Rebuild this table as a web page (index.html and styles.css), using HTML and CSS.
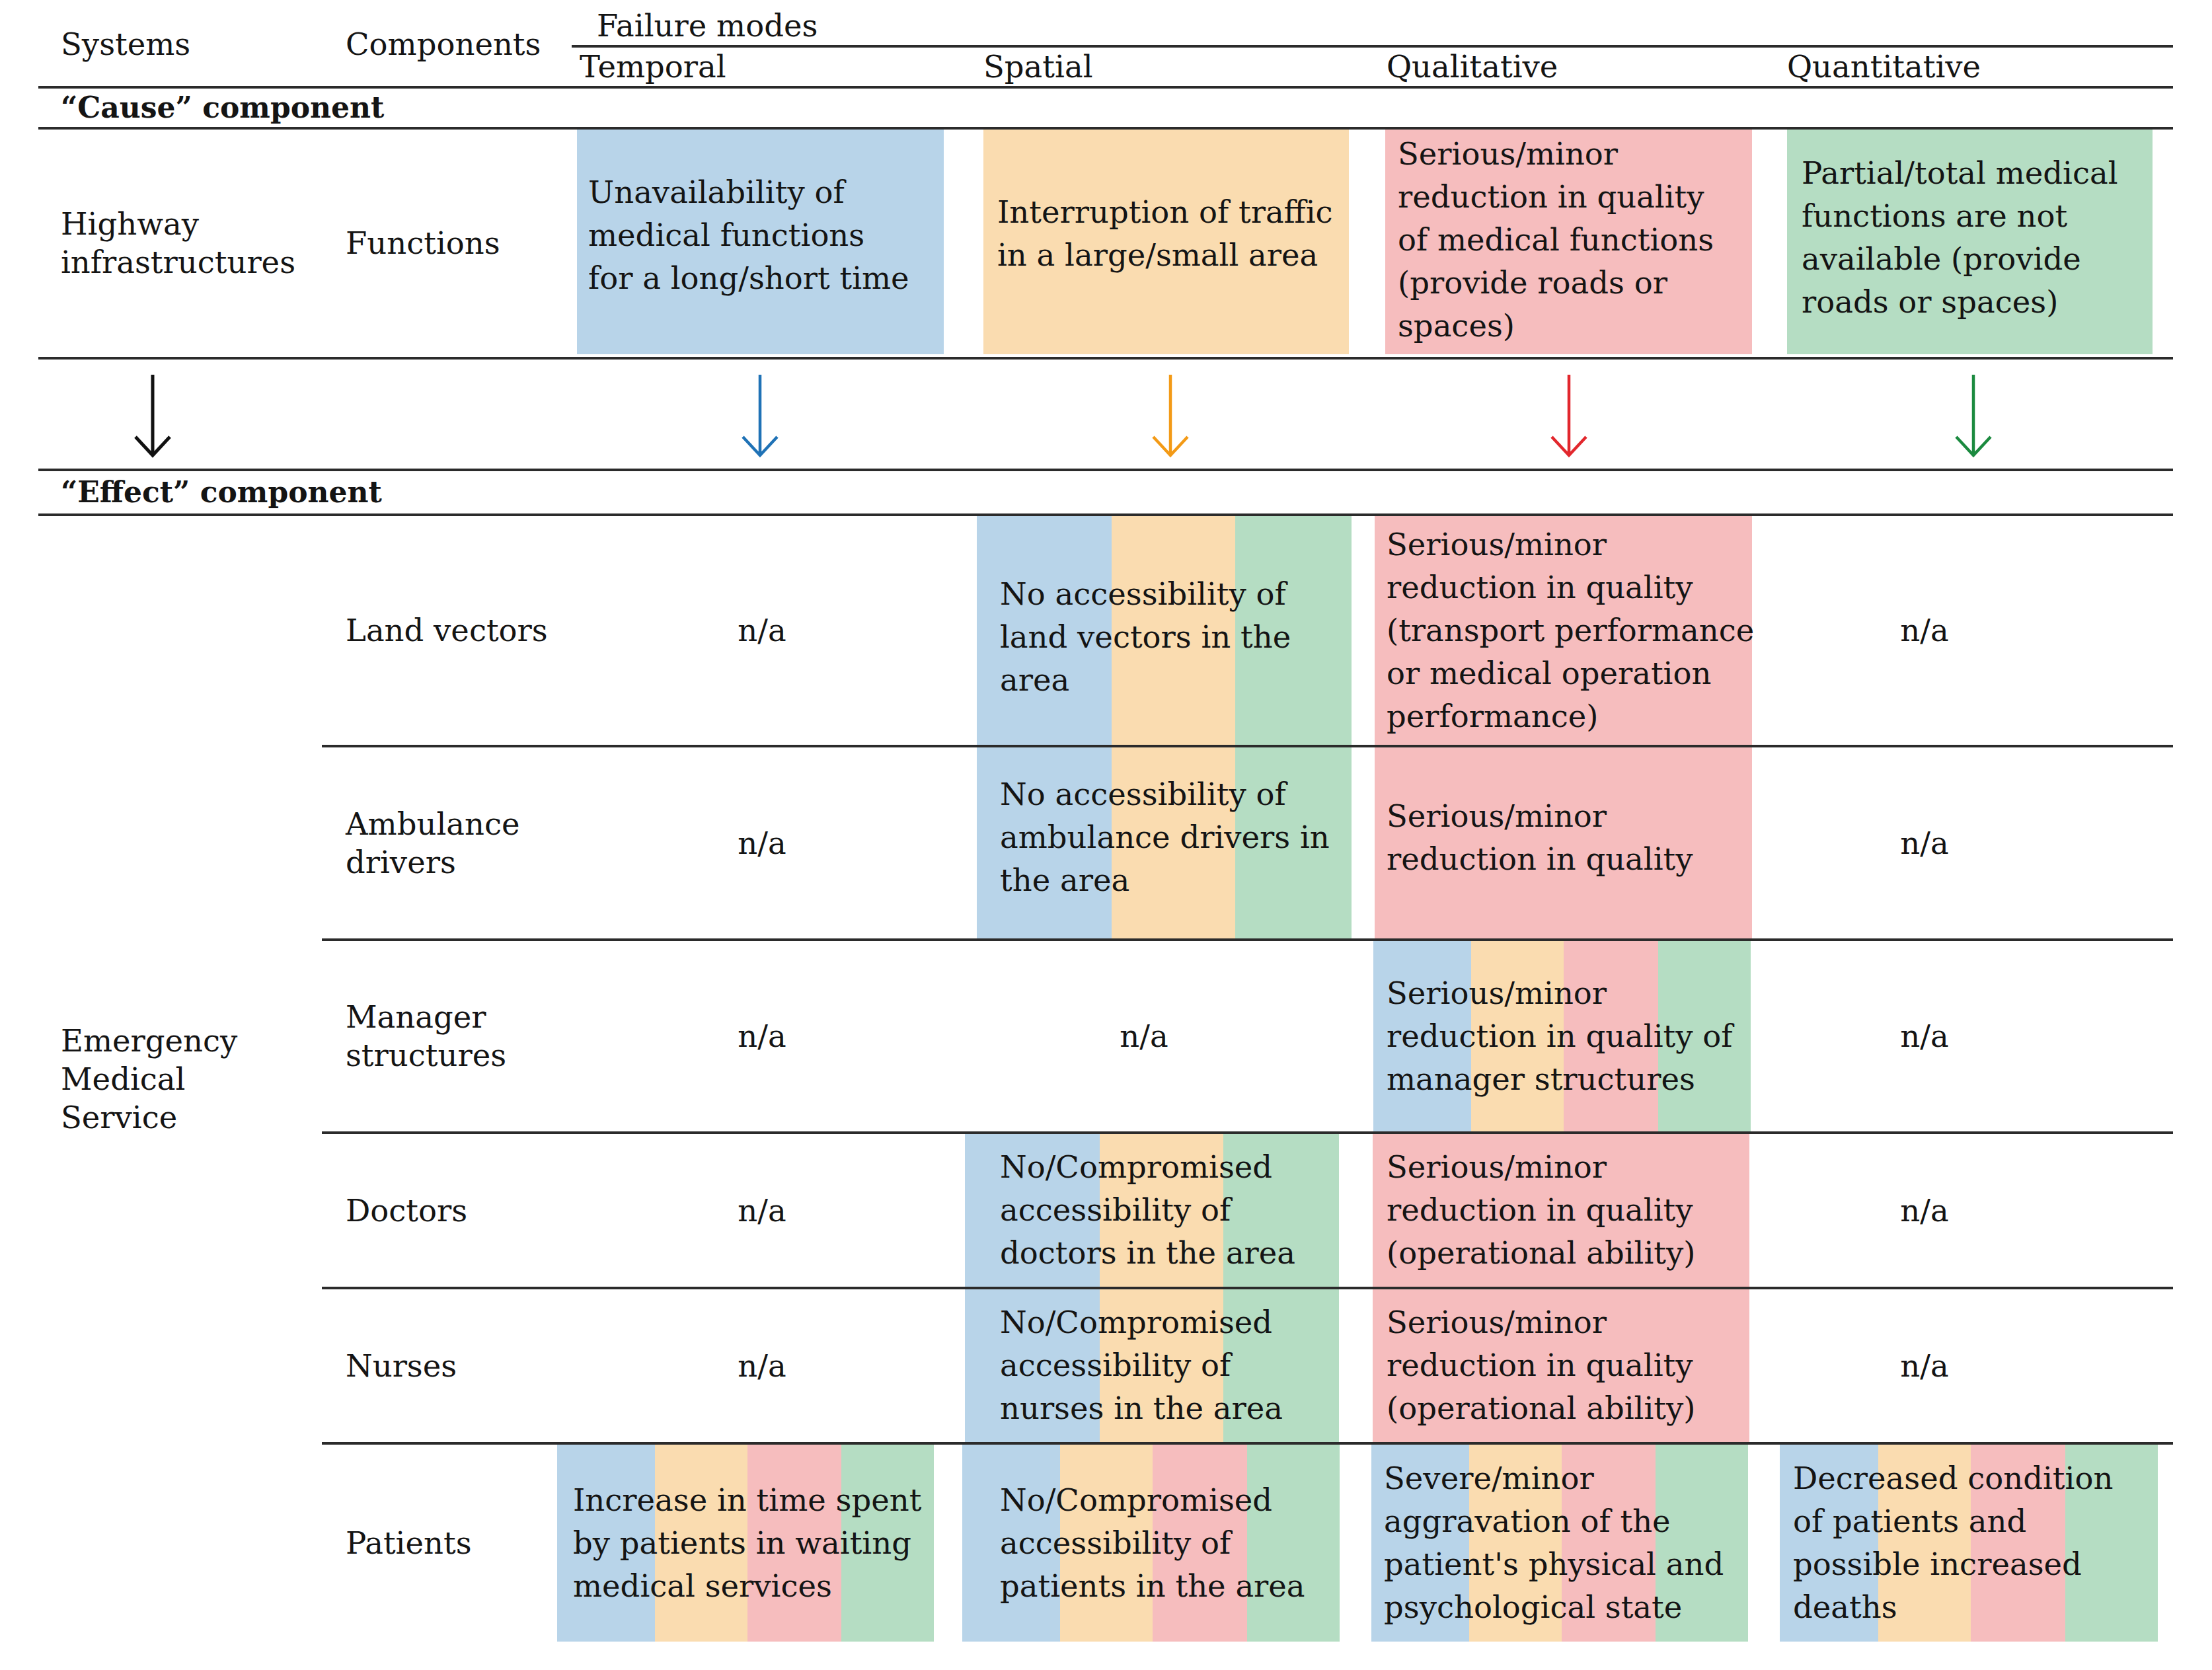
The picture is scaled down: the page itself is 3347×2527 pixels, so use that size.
FILE: index.html
```html
<!DOCTYPE html>
<html lang="en">
<head>
<meta charset="utf-8">
<title>Failure modes table</title>
<link rel="stylesheet" href="styles.css">
</head>
<body>
<div class="table">
  <div class="head">
    <div class="h-sys">Systems</div>
    <div class="h-comp">Components</div>
    <div class="h-fm">Failure modes</div>
    <div class="h-sub h-t">Temporal</div>
    <div class="h-sub h-s">Spatial</div>
    <div class="h-sub h-ql">Qualitative</div>
    <div class="h-sub h-qn">Quantitative</div>
  </div>

  <div class="section-label cause-label">“Cause” component</div>

  <div class="row-full cause-row">
    <div class="lab1">Highway<br>infrastructures</div>
    <div class="lab2">Functions</div>
    <div class="cell blue cz-t"><p>Unavailability of<br>medical functions<br>for a long/short time</p></div>
    <div class="cell orange cz-s"><p>Interruption of traffic<br>in a large/small area</p></div>
    <div class="cell red cz-ql"><p>Serious/minor<br>reduction in quality<br>of medical functions<br>(provide roads or<br>spaces)</p></div>
    <div class="cell green cz-qn"><p>Partial/total medical<br>functions are not<br>available (provide<br>roads or spaces)</p></div>
  </div>

  <div class="row-full arrow-row">
    <div class="arrow a-black"><svg viewBox="0 0 60 130" width="60" height="130"><path d="M30 3 V125 M4 97 L30 125 L56 97" fill="none" stroke="#111111" stroke-width="5"/></svg></div>
    <div></div>
    <div class="arrow a-blue"><svg viewBox="0 0 60 130" width="60" height="130"><path d="M30 3 V125 M4 97 L30 125 L56 97" fill="none" stroke="#1f72b6" stroke-width="4.5"/></svg></div>
    <div class="arrow a-orange"><svg viewBox="0 0 60 130" width="60" height="130"><path d="M30 3 V125 M4 97 L30 125 L56 97" fill="none" stroke="#f39a16" stroke-width="4.5"/></svg></div>
    <div class="arrow a-red"><svg viewBox="0 0 60 130" width="60" height="130"><path d="M30 3 V125 M4 97 L30 125 L56 97" fill="none" stroke="#e2272d" stroke-width="4.5"/></svg></div>
    <div class="arrow a-green"><svg viewBox="0 0 60 130" width="60" height="130"><path d="M30 3 V125 M4 97 L30 125 L56 97" fill="none" stroke="#1b8a3f" stroke-width="4.5"/></svg></div>
  </div>

  <div class="section-label effect-label">“Effect” component</div>

  <div class="effect">
    <div class="ems">Emergency<br>Medical<br>Service</div>
    <div class="effect-rows">
      <div class="erow r-land">
        <div class="lab2">Land vectors</div>
        <div class="na na-t">n/a</div>
        <div class="cell tri ev-s1 lower"><p>No accessibility of<br>land vectors in the<br>area</p></div>
        <div class="cell red ev-ql1"><p>Serious/minor<br>reduction in quality<br>(transport performance<br>or medical operation<br>performance)</p></div>
        <div class="na na-qn">n/a</div>
      </div>
      <div class="erow r-amb">
        <div class="lab2">Ambulance<br>drivers</div>
        <div class="na na-t">n/a</div>
        <div class="cell tri ev-s1"><p>No accessibility of<br>ambulance drivers in<br>the area</p></div>
        <div class="cell red ev-ql1"><p>Serious/minor<br>reduction in quality</p></div>
        <div class="na na-qn">n/a</div>
      </div>
      <div class="erow r-man">
        <div class="lab2">Manager<br>structures</div>
        <div class="na na-t">n/a</div>
        <div class="na na-s">n/a</div>
        <div class="cell quad ev-ql2"><p>Serious/minor<br>reduction in quality of<br>manager structures</p></div>
        <div class="na na-qn">n/a</div>
      </div>
      <div class="erow r-doc">
        <div class="lab2">Doctors</div>
        <div class="na na-t">n/a</div>
        <div class="cell tri ev-s2"><p>No/Compromised<br>accessibility of<br>doctors in the area</p></div>
        <div class="cell red ev-ql3"><p>Serious/minor<br>reduction in quality<br>(operational ability)</p></div>
        <div class="na na-qn">n/a</div>
      </div>
      <div class="erow r-nur">
        <div class="lab2">Nurses</div>
        <div class="na na-t">n/a</div>
        <div class="cell tri ev-s2"><p>No/Compromised<br>accessibility of<br>nurses in the area</p></div>
        <div class="cell red ev-ql3"><p>Serious/minor<br>reduction in quality<br>(operational ability)</p></div>
        <div class="na na-qn">n/a</div>
      </div>
      <div class="erow r-pat">
        <div class="lab2">Patients</div>
        <div class="cell quad ev-pt"><p>Increase in time spent<br>by patients in waiting<br>medical services</p></div>
        <div class="cell quad ev-ps"><p>No/Compromised<br>accessibility of<br>patients in the area</p></div>
        <div class="cell quad ev-pql"><p>Severe/minor<br>aggravation of the<br>patient's physical and<br>psychological state</p></div>
        <div class="cell quad ev-pqn"><p>Decreased condition<br>of patients and<br>possible increased<br>deaths</p></div>
      </div>
    </div>
  </div>
</div>
</body>
</html>
```

FILE: styles.css
```css
* { box-sizing: border-box; }

html, body {
  margin: 0;
  padding: 0;
  background: #ffffff;
}

body {
  width: 3347px;
  height: 2527px;
  font-family: "DejaVu Serif", "Liberation Serif", serif;
  font-size: 46.5px;
  color: #141414;
  overflow: hidden;
}

p { margin: 0; }

.table {
  margin-left: 58px;
  width: 3230px;
}

/* ---------- header ---------- */
.head {
  display: grid;
  grid-template-columns: 429px 354px 600px 619px 610px 618px;
  grid-template-rows: 72px 58px;
  border-bottom: 4px solid #2b2b2b;
  line-height: 58px;
  white-space: nowrap;
}

.h-sys, .h-comp {
  grid-row: 1 / 3;
  display: flex;
  align-items: center;
  padding-top: 4px;
}
.h-sys { grid-column: 1; padding-left: 34px; }
.h-comp { grid-column: 2; padding-left: 36px; }

.h-fm {
  grid-column: 3 / 7;
  grid-row: 1;
  margin-left: 24px;
  padding-left: 38px;
  border-bottom: 4px solid #2b2b2b;
  display: flex;
  align-items: flex-end;
}

.h-sub { grid-row: 2; display: flex; align-items: center; }
.h-t { grid-column: 3; padding-left: 36px; }
.h-s { grid-column: 4; padding-left: 47px; }
.h-ql { grid-column: 5; padding-left: 38px; }
.h-qn { grid-column: 6; padding-left: 34px; }

/* ---------- section labels ---------- */
.section-label {
  font-weight: bold;
  font-size: 44px;
  padding-left: 34px;
  display: flex;
  align-items: center;
  border-bottom: 4px solid #2b2b2b;
  line-height: 58px;
  white-space: nowrap;
}
.cause-label { height: 62px; }
.effect-label { height: 68px; }

/* ---------- rows ---------- */
.row-full {
  display: grid;
  grid-template-columns: 429px 354px 600px 619px 610px 618px;
  border-bottom: 4px solid #2b2b2b;
}
.cause-row { height: 348px; }
.arrow-row { height: 169px; }

.lab1, .lab2 {
  display: flex;
  align-items: center;
  line-height: 58px;
  white-space: nowrap;
}
.lab1 { padding-left: 34px; }
.lab2 { padding-left: 36px; }

.cell {
  display: flex;
  align-items: center;
  line-height: 65px;
  white-space: nowrap;
}
.lower { padding-top: 20px; }

.blue { background: #b8d4e9; }
.orange { background: #fadcb0; }
.red { background: #f6bdbe; }
.green { background: #b5ddc3; }

.tri {
  background: linear-gradient(to right,
    #b8d4e9 0 36%, #fadcb0 36% 69%, #b5ddc3 69% 100%);
}
.quad {
  background: linear-gradient(to right,
    #b8d4e9 0 26%, #fadcb0 26% 50.5%, #f6bdbe 50.5% 75.5%, #b5ddc3 75.5% 100%);
}

/* cause row cells */
.cz-t { margin: 0 13px 4px 32px; padding-left: 17px; padding-bottom: 20px; }
.cz-s { margin: 0 19px 4px 47px; padding-left: 21px; padding-bottom: 24px; }
.cz-ql { margin: 0 19px 4px 36px; padding-left: 19px; padding-bottom: 6px; }
.cz-qn { margin: 0 31px 4px 34px; padding-left: 22px; padding-bottom: 12px; }

/* arrows */
.arrow { padding-top: 20px; }
.arrow svg { display: block; }
.a-black { padding-left: 143px; }
.a-blue { padding-left: 279px; }
.a-orange { padding-left: 300px; }
.a-red { padding-left: 284px; }
.a-green { padding-left: 286px; }

/* ---------- effect block ---------- */
.effect {
  display: flex;
}
.ems {
  width: 429px;
  flex: none;
  padding-left: 34px;
  display: flex;
  align-items: center;
  line-height: 58px;
  white-space: nowrap;
}
.effect-rows {
  flex: 1;
}
.erow {
  display: grid;
  grid-template-columns: 354px 600px 619px 610px 618px;
  border-bottom: 4px solid #2b2b2b;
}
.r-land { height: 350px; }
.r-amb { height: 293px; }
.r-amb .cell { padding-bottom: 16px; }
.r-man { height: 292px; }
.r-doc { height: 235px; }
.r-nur { height: 235px; }
.r-pat { height: 298px; border-bottom: none; }

.na {
  display: flex;
  align-items: center;
  justify-content: center;
  line-height: 58px;
}
.na-t { grid-column: 2; padding-left: 24px; }
.na-s { grid-column: 3; padding-right: 39px; }
.na-qn { grid-column: 5; padding-right: 134px; }

.ev-s1 { grid-column: 3; margin: 0 15px 0 37px; padding-left: 35px; }
.ev-ql1 { grid-column: 4; margin: 0 19px 0 20px; padding-left: 18px; }
.ev-ql2 { grid-column: 4; margin: 0 21px 0 18px; padding-left: 20px; }
.ev-s2 { grid-column: 3; margin: 0 34px 0 19px; padding-left: 53px; }
.ev-ql3 { grid-column: 4; margin: 0 23px 0 17px; padding-left: 21px; }

.ev-pt { grid-column: 2; margin: 0 28px 0 2px; padding-left: 24px; }
.ev-ps { grid-column: 3; margin: 0 33px 0 15px; padding-left: 57px; }
.ev-pql { grid-column: 4; margin: 0 25px 0 15px; padding-left: 19px; }
.ev-pqn { grid-column: 5; margin: 0 23px 0 23px; padding-left: 20px; }
```
